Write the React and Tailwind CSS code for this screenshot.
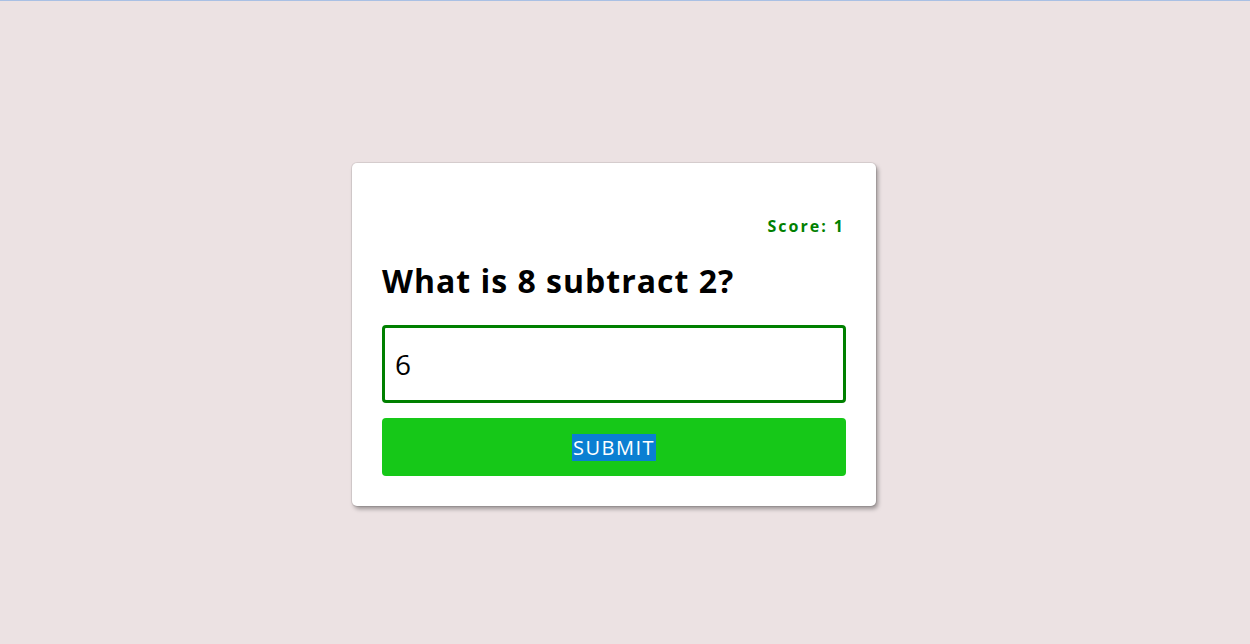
export default function App() {
  return (
    <div
      className="min-h-[644px] w-full border-t border-[#a9c0e4] bg-[#ece2e3] pt-[162px] pr-[22px] flex justify-center items-start"
      style={{ fontFamily: '"Comic Sans MS", "Open Sans", Lato, sans-serif' }}
    >
      <div className="w-[524px] rounded-[5px] bg-white px-[30px] pt-[51px] pb-[30px] shadow-[2px_3px_4px_rgba(0,0,0,0.35),0_0_0_1px_rgba(0,0,0,0.08)]">
        <p className="text-right pr-[1px] text-[16px] leading-6 font-bold tracking-[2px] text-[#008000]">Score: 1</p>
        <h1 className="mt-[23px] text-[32px] leading-10 font-bold tracking-[1px] text-black">What is 8 subtract 2?</h1>
        <input
          type="text"
          defaultValue="6"
          className="mt-[24px] block h-[78px] w-full rounded-[4px] border-[3px] border-[#008000] bg-white px-[10px] text-[28px] text-black outline-none"
          style={{ fontFamily: "inherit" }}
        />
        <button
          type="button"
          className="mt-[15px] flex h-[58px] w-full items-center justify-center rounded-[4px] bg-[#16c818] text-white text-[20px]"
          style={{ fontFamily: "inherit" }}
        >
          <span className="bg-[#0a7fd2] px-[1px] leading-[27px] tracking-[1.5px]">SUBMIT</span>
        </button>
      </div>
    </div>
  );
}
